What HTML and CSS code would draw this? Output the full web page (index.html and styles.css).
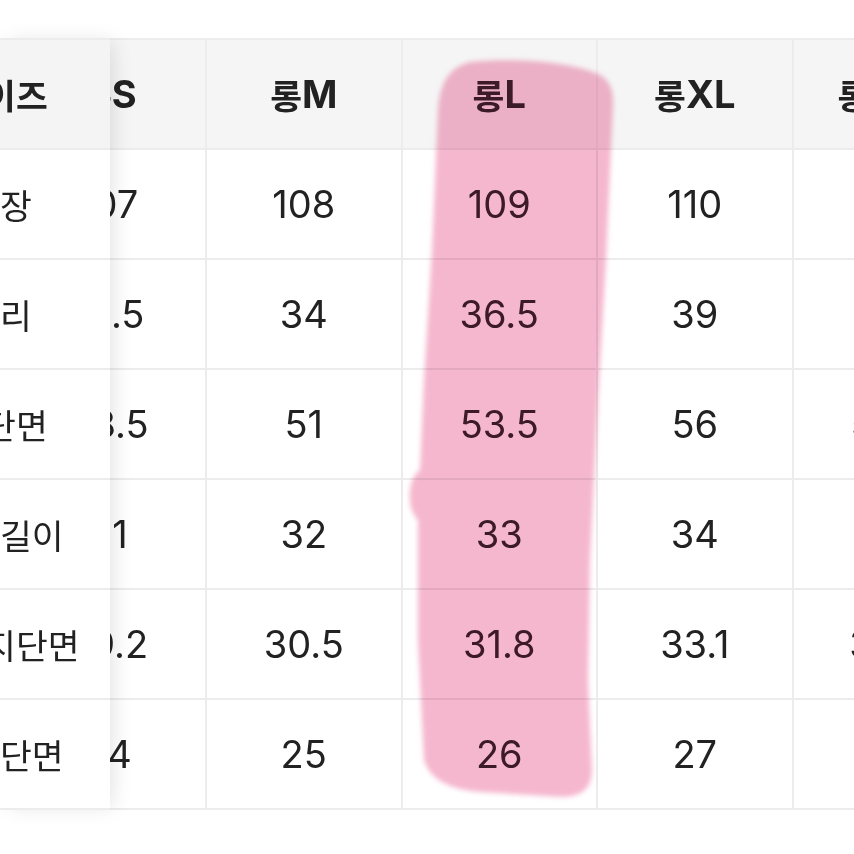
FILE: index.html
```html
<!DOCTYPE html>
<html lang="ko">
<head>
<meta charset="utf-8">
<title>사이즈표</title>
<link rel="stylesheet" href="styles.css">
</head>
<body>
<div class="viewport">
  <div class="table">
    <div class="cell head"><span class="ko">롱</span>S</div>
    <div class="cell head"><span class="ko">롱</span>M</div>
    <div class="cell head hl"><span class="ko">롱</span>L</div>
    <div class="cell head"><span class="ko">롱</span>XL</div>
    <div class="cell head"><span class="ko">롱</span>2XL</div>

    <div class="cell">107</div><div class="cell">108</div><div class="cell hl">109</div><div class="cell">110</div><div class="cell">111</div>
    <div class="cell">31.5</div><div class="cell">34</div><div class="cell hl">36.5</div><div class="cell">39</div><div class="cell">41.5</div>
    <div class="cell">48.5</div><div class="cell">51</div><div class="cell hl">53.5</div><div class="cell">56</div><div class="cell">58.5</div>
    <div class="cell">31</div><div class="cell">32</div><div class="cell hl">33</div><div class="cell">34</div><div class="cell">35</div>
    <div class="cell">29.2</div><div class="cell">30.5</div><div class="cell hl">31.8</div><div class="cell">33.1</div><div class="cell">34.4</div>
    <div class="cell">24</div><div class="cell">25</div><div class="cell hl">26</div><div class="cell">27</div><div class="cell">28</div>
  </div>

  <div class="sticky">
    <div class="label head"><span class="ko">사이즈</span></div>
    <div class="label"><span class="ko">총장</span></div>
    <div class="label"><span class="ko">허리</span></div>
    <div class="label"><span class="ko">힙단면</span></div>
    <div class="label"><span class="ko">밑위길이</span></div>
    <div class="label"><span class="ko">허벅지단면</span></div>
    <div class="label"><span class="ko">밑단단면</span></div>
  </div>

  <svg class="marker" width="854" height="854" viewBox="0 0 854 854" aria-hidden="true">
    <defs>
      <filter id="soft" x="-10%" y="-10%" width="120%" height="120%">
        <feGaussianBlur stdDeviation="2.5"/>
      </filter>
    </defs>
    <path filter="url(#soft)" fill="#f5b7ce"
      d="M 470 62 C 520 57, 575 63, 600 75 Q 614 83, 613 105 L 606 260 L 598 400 L 590 560 L 588 680 L 592 770 Q 592 797, 562 797 L 480 792 Q 432 788, 424 760 L 418 640 L 418 520 Q 408 510, 410 490 Q 412 475, 420 470 L 424 380 L 432 250 L 438 110 Q 440 69, 470 62 Z"/>
  </svg>
</div>
</body>
</html>
```

FILE: styles.css
```css
html, body {
  margin: 0;
  padding: 0;
  background: #ffffff;
}

body {
  font-family: Inter, "Noto Sans CJK KR", sans-serif;
  color: #222222;
}

.viewport {
  position: relative;
  width: 854px;
  height: 854px;
  overflow: hidden;
  background: #ffffff;
}

.table {
  display: grid;
  grid-template-columns: repeat(5, 195.5px);
  width: max-content;
  margin: 38px 0 0 11.5px;
  border-top: 2px solid #ececec;
}

.cell {
  box-sizing: border-box;
  height: 110px;
  display: flex;
  align-items: center;
  justify-content: center;
  border-right: 2px solid #ececec;
  border-bottom: 2px solid #ececec;
  font-size: 38px;
  font-weight: 400;
  white-space: nowrap;
}

.head {
  background: #f5f5f5;
  font-weight: 700;
}

.ko {
  font-family: "Noto Sans CJK KR", sans-serif;
  font-size: 0.91em;
}

.hl {
  color: #3e2330;
}

.sticky {
  position: absolute;
  left: 0;
  top: 38px;
  width: 110px;
  border-top: 2px solid #ececec;
  background: #ffffff;
  box-shadow: 6px 0 20px -4px rgba(0, 0, 0, 0.12);
  z-index: 1;
}

.label {
  box-sizing: border-box;
  width: 220px;
  height: 110px;
  margin-left: -110px;
  display: flex;
  align-items: center;
  justify-content: center;
  border-bottom: 2px solid #ececec;
  background: #ffffff;
  font-size: 38px;
  font-weight: 400;
  white-space: nowrap;
}

.label.head {
  background: #f4f4f4;
  font-weight: 700;
}

.marker {
  position: absolute;
  left: 0;
  top: 0;
  z-index: 2;
  mix-blend-mode: multiply;
  pointer-events: none;
}
```
